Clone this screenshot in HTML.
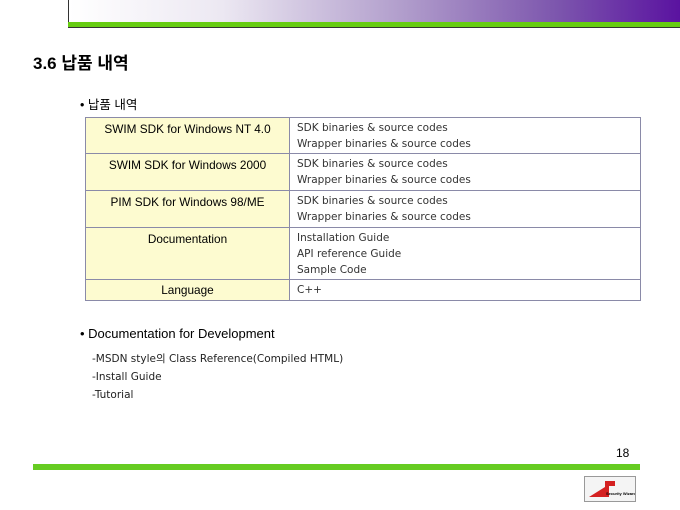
<!DOCTYPE html>
<html><head><meta charset="utf-8"><style>
body{margin:0;width:680px;height:510px;background:#fff;position:relative;overflow:hidden;font-family:"Liberation Sans","Noto Sans CJK KR",sans-serif;}
.ab{position:absolute}
table{border-collapse:collapse;position:absolute;left:85px;top:117px;width:556px;font-size:11.8px;table-layout:fixed}
td{border:1px solid #8a8aa8;padding:0;vertical-align:top;overflow:hidden}
td.l{background:#fdfbd0;text-align:center;width:203px;padding-top:3px;color:#000;line-height:16px}
td.r{padding:2px 0 0 7px;line-height:16px;color:#333;font-family:"DejaVu Sans","Noto Sans CJK KR",sans-serif;font-size:10.5px}
.list{font-family:"DejaVu Sans","Noto Sans CJK KR",sans-serif;font-size:10.5px;color:#222;line-height:18px}
</style></head><body>
<div class="ab" style="left:68px;top:0;width:612px;height:22px;border-left:1px solid #333;background:linear-gradient(to right,#fff 0%,#ece8f2 25%,#b09ccb 55%,#7c55ad 80%,#5a12a0 100%)"></div>
<div class="ab" style="left:68px;top:22px;width:612px;height:5px;background:#66cc11;border-bottom:1px solid #333"></div>
<div class="ab" style="left:33px;top:49px;font-size:17px;font-weight:bold">3.6 납품 내역</div>
<div class="ab" style="left:80px;top:94px;font-size:12.5px">• 납품 내역</div>
<table>
<tr><td class="l" style="height:32px">SWIM SDK for Windows NT 4.0</td><td class="r">SDK binaries &amp; source codes<br>Wrapper binaries &amp; source codes</td></tr>
<tr><td class="l" style="height:33px">SWIM SDK for Windows 2000</td><td class="r">SDK binaries &amp; source codes<br>Wrapper binaries &amp; source codes</td></tr>
<tr><td class="l" style="height:33px">PIM SDK for Windows 98/ME</td><td class="r">SDK binaries &amp; source codes<br>Wrapper binaries &amp; source codes</td></tr>
<tr><td class="l" style="height:48px">Documentation</td><td class="r">Installation Guide<br>API reference Guide<br>Sample Code</td></tr>
<tr><td class="l" style="height:18px;padding-top:2px">Language</td><td class="r">C++</td></tr>
</table>
<div class="ab" style="left:80px;top:326px;font-size:13px">• Documentation for Development</div>
<div class="ab list" style="left:92px;top:350px">-MSDN style의 Class Reference(Compiled HTML)<br>-Install Guide<br>-Tutorial</div>
<div class="ab" style="left:616px;top:446px;font-size:12px">18</div>
<div class="ab" style="left:33px;top:464px;width:607px;height:6px;background:#66cc22"></div>
<div class="ab" style="left:584px;top:476px;width:50px;height:24px;border:1px solid #999;background:#f4f4f4">
<svg width="50" height="24"><polygon points="4,20 20,10 20,4 30,4 30,9 24,9 24,20" fill="#d42020"/><text x="21" y="18" font-size="4" font-weight="bold" font-family="Liberation Sans">Security Wizard</text></svg></div>
</body></html>
